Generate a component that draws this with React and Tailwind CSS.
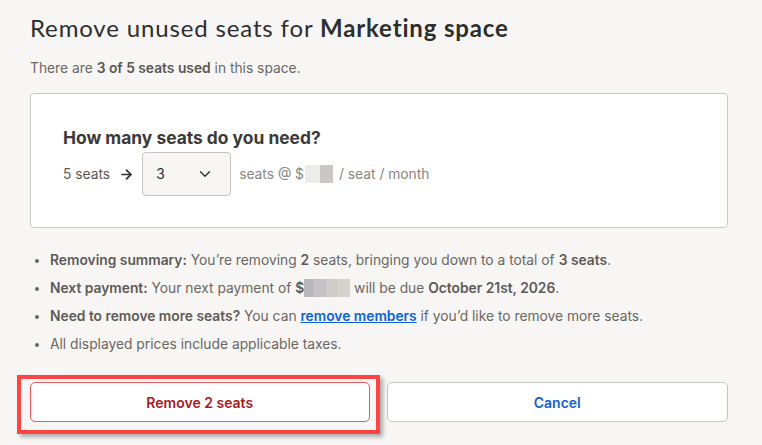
import React from 'react'
import { ChevronDown, ArrowRight } from 'lucide-react'

const body = { fontFamily: 'Inter, "Liberation Sans", sans-serif' }
const head = { fontFamily: 'Lato, "Open Sans", sans-serif' }

function Blur({ className }) {
  return <span className={'inline-block align-middle ' + className}></span>
}

export default function App() {
  return (
    <div className="w-[762px] h-[445px] overflow-hidden bg-[#f7f6f5] pl-[30px] pr-[34px] pt-[12px] text-[#6b6661]" style={body}>
      <h1 className="text-[24px] leading-[32px] tracking-[0.85px] text-[#2d2e2e]" style={head}>
        Remove unused seats for <span className="font-bold">Marketing space</span>
      </h1>
      <p className="mt-[14px] text-[13.8px] leading-[20px]">
        There are <span className="font-semibold text-[#5c5752]">3 of 5 seats used</span> in this space.
      </p>

      <div className="mt-[15px] h-[135px] rounded-[4px] border border-[#ccc8c3] bg-white px-[32px] pt-[32px]">
        <h2 className="text-[17.4px] leading-[24px] font-bold text-[#3b3a39]">How many seats do you need?</h2>
        <div className="mt-[2px] flex items-center text-[13.8px]">
          <span className="text-[#5c5752]">5 seats</span>
          <ArrowRight size={15} strokeWidth={2.75} className="ml-[9px] text-[#2d2e2e]" />
          <div className="ml-[8px] flex h-[44px] w-[89px] items-center justify-between rounded-[4px] border border-[#c8c4bf] bg-[#f7f6f5] pl-[13px] pr-[16px] text-[#2d2e2e]">
            <span>3</span>
            <ChevronDown size={18} strokeWidth={1.75} />
          </div>
          <span className="ml-[8px] text-[#8a8580]">seats @ $</span>
          <span className="ml-[1px] flex h-[18px]">
            <Blur className="w-[15px] h-[18px] bg-[#ececea]" />
            <Blur className="w-[13px] h-[18px] bg-[#ccc7c2]" />
          </span>
          <span className="ml-[6px] text-[#8a8580]">/ seat / month</span>
        </div>
      </div>

      <ul className="mt-[18px] list-disc pl-[20px] text-[13.8px] leading-[28px] marker:text-[#6b6661]">
        <li>
          <span className="font-semibold text-[#5f5a55]">Removing summary:</span> You’re removing{' '}
          <span className="font-semibold text-[#5f5a55]">2</span> seats, bringing you down to a total of{' '}
          <span className="font-semibold text-[#5f5a55]">3 seats</span>.
        </li>
        <li>
          <span className="font-semibold text-[#5f5a55]">Next payment:</span> Your next payment of{' '}
          <span className="font-semibold text-[#5f5a55]">$</span>
          <span className="inline-flex h-[18px] align-[-4px]">
            <Blur className="w-[10px] h-[18px] bg-[#b9b9bd]" />
            <Blur className="w-[12px] h-[18px] bg-[#c4c2c5]" />
            <Blur className="w-[12px] h-[18px] bg-[#cfccc9]" />
            <Blur className="w-[12px] h-[18px] bg-[#d6d3cf]" />
          </span>{' '}
          will be due <span className="font-semibold text-[#5f5a55]">October 21st, 2026</span>.
        </li>
        <li>
          <span className="font-semibold text-[#5f5a55]">Need to remove more seats?</span> You can{' '}
          <a className="font-semibold text-[#0b63d6] underline">remove members</a> if you’d like to remove more seats.
        </li>
        <li>All displayed prices include applicable taxes.</li>
      </ul>

      <div className="mt-[24px] flex gap-[17px]">
        <div className="relative flex-1">
          <button className="flex h-[40px] w-full items-center justify-center rounded-[5px] border border-[#f0595c] bg-white text-[14px] font-semibold text-[#a8191e]">
            Remove 2 seats
          </button>
          <div className="pointer-events-none absolute -left-[13px] -top-[7px] -right-[10px] -bottom-[12px] border-[4px] border-[#ff4444] shadow-[3px_3px_4px_rgba(0,0,0,0.3)]"></div>
        </div>
        <button className="flex h-[40px] flex-1 items-center justify-center rounded-[5px] border border-[#c8c4bf] bg-white text-[14px] font-semibold text-[#1761c9]">
          Cancel
        </button>
      </div>
    </div>
  )
}
